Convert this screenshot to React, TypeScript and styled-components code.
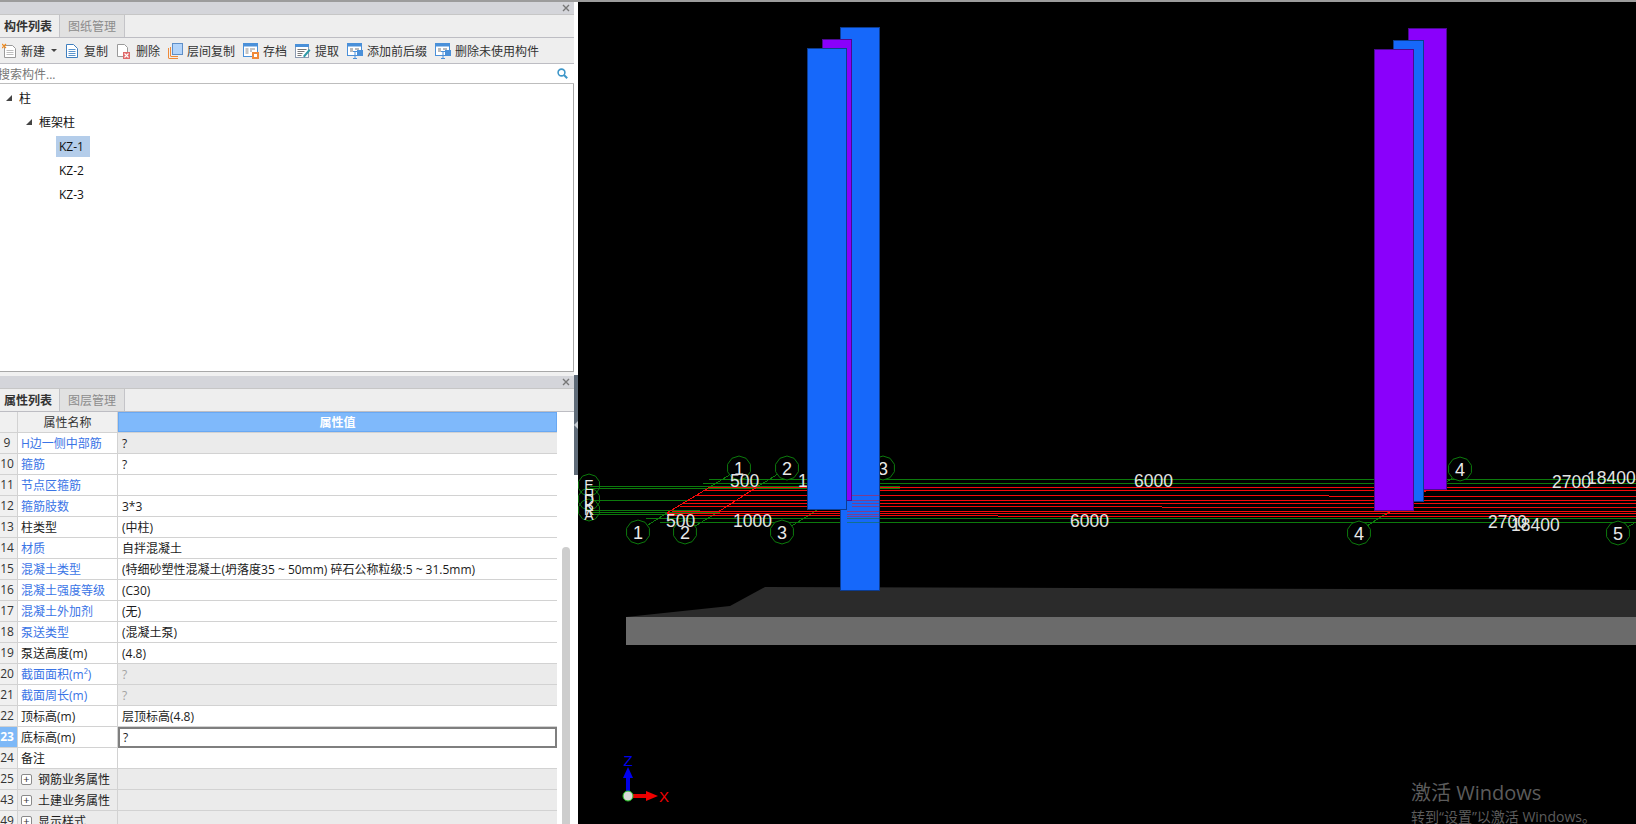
import React from "react";
import styled, { createGlobalStyle } from "styled-components";

const GlobalStyle = createGlobalStyle`
  html, body {
    margin: 0;
    padding: 0;
    height: 100%;
    overflow: hidden;
    background: #fff;
    font-family: "Open Sans", "Noto Sans CJK SC", sans-serif;
    font-size: 12px;
    color: #222;
  }
`;

const Screen = styled.div`
  width: 1636px;
  height: 824px;
  display: flex;
  flex-direction: column;
  overflow: hidden;
`;

const TopEdge = styled.div`
  height: 2px;
  flex: none;
  background: #9c9c9c;
`;

const Main = styled.div`
  flex: 1;
  min-height: 0;
  display: flex;
`;

const LeftColumn = styled.div`
  width: 574px;
  flex: none;
  display: flex;
  flex-direction: column;
`;

const Gutter = styled.div`
  width: 4px;
  flex: none;
  background: #fff;
  padding-top: 373px;
`;

const SplitHandle = styled.div`
  height: 100px;
  background: #5f6b78;
  display: flex;
  align-items: center;
`;

const HandleArrow = styled.div`
  width: 0;
  height: 0;
  border-top: 4px solid transparent;
  border-bottom: 4px solid transparent;
  border-right: 4px solid #c5cbd1;
`;

const TitleBar = styled.div`
  height: 12px;
  flex: none;
  background: #d4d5da;
  display: flex;
  justify-content: flex-end;
  align-items: center;
  padding-right: 4px;
`;

const TabBar = styled.div`
  height: 22px;
  flex: none;
  display: flex;
  background: #eeeeee;
  border-top: 1px solid #c6c6c6;
  border-bottom: 1px solid #bdbdc3;
`;

const Tab = styled.div<{ $active?: boolean }>`
  width: ${(p) => (p.$active ? "60px" : "65px")};
  display: flex;
  align-items: center;
  justify-content: ${(p) => (p.$active ? "flex-start" : "center")};
  padding-left: ${(p) => (p.$active ? "4px" : "0")};
  box-sizing: border-box;
  font-weight: ${(p) => (p.$active ? 700 : 400)};
  color: ${(p) => (p.$active ? "#333" : "#8c8c8c")};
  background: ${(p) => (p.$active ? "#eeeeee" : "#e1e1e1")};
  border-right: 1px solid #c4c4c8;
`;

const Toolbar = styled.div`
  height: 25px;
  flex: none;
  display: flex;
  align-items: center;
  gap: 8px;
  padding-left: 2px;
  background: #eeeeee;
  border-bottom: 1px solid #bdbdc3;
`;

const ToolButton = styled.div`
  display: flex;
  align-items: center;
  gap: 4px;
  color: #333;
  white-space: nowrap;
`;

const DropCaret = styled.span`
  width: 0;
  height: 0;
  margin-left: 2px;
  border-left: 3px solid transparent;
  border-right: 3px solid transparent;
  border-top: 3px solid #444;
`;

const SearchRow = styled.div`
  height: 19px;
  flex: none;
  display: flex;
  align-items: center;
  justify-content: space-between;
  padding-right: 6px;
  background: #fff;
  border-bottom: 1px solid #bdbdbd;
`;

const SearchPlaceholder = styled.span`
  margin-left: -2px;
  color: #777;
`;

const TreePane = styled.div`
  height: 288px;
  flex: none;
  padding-top: 2px;
  box-sizing: border-box;
  background: #fff;
  border-right: 1px solid #a8a8a8;
  border-bottom: 1px solid #a8a8a8;
`;

const TreeRow = styled.div<{ $indent: number }>`
  height: 24px;
  display: flex;
  align-items: center;
  padding-left: ${(p) => p.$indent}px;
  gap: 7px;
  color: #111;
`;

const Triangle = styled.span`
  width: 0;
  height: 0;
  border-left: 6px solid transparent;
  border-bottom: 6px solid #444;
`;

const Leaf = styled.span<{ $selected?: boolean }>`
  height: 21px;
  line-height: 21px;
  padding: 0 6px 0 3px;
  background: ${(p) => (p.$selected ? "#b4cdea" : "transparent")};
`;

const PaneGap = styled.div`
  height: 4px;
  flex: none;
  background: #f0f0f0;
`;

const PropsBody = styled.div`
  flex: 1;
  min-height: 0;
  display: flex;
  background: #fff;
  overflow: hidden;
`;

const Grid = styled.div`
  width: 557px;
  flex: none;
`;

const Row = styled.div`
  height: 21px;
  display: flex;
  box-sizing: border-box;
  border-bottom: 1px solid #d2d2d2;
`;

const IndexCell = styled.div<{ $current?: boolean }>`
  width: 18px;
  flex: none;
  box-sizing: border-box;
  padding-right: 3px;
  text-align: center;
  line-height: 20px;
  white-space: nowrap;
  border-right: 1px solid #d2d2d2;
  font-weight: ${(p) => (p.$current ? 700 : 400)};
  color: ${(p) => (p.$current ? "#fff" : "#333")};
  background: ${(p) => (p.$current ? "#7db8f7" : "#f0f0f0")};
`;

const NameCell = styled.div<{ $link?: boolean; $grey?: boolean }>`
  width: 100px;
  flex: none;
  box-sizing: border-box;
  padding-left: 3px;
  display: flex;
  align-items: center;
  gap: 6px;
  white-space: nowrap;
  border-right: 1px solid #d2d2d2;
  color: ${(p) => (p.$link ? "#3a74e6" : "#1c1c1c")};
  background: ${(p) => (p.$grey ? "#ebebeb" : "#fff")};
`;

const ValueCell = styled.div<{ $grey?: boolean; $muted?: boolean }>`
  flex: 1;
  box-sizing: border-box;
  padding-left: 4px;
  display: flex;
  align-items: center;
  white-space: nowrap;
  color: ${(p) => (p.$muted ? "#a3a3a3" : "#1c1c1c")};
  background: ${(p) => (p.$grey ? "#ebebeb" : "#fff")};
`;

const FocusedValue = styled(ValueCell)`
  border: 2px solid #7f7f7f;
  padding-left: 3px;
  margin-bottom: -1px;
`;

const HeaderName = styled(NameCell)`
  justify-content: center;
  padding: 0;
  background: #f0f0f0;
  color: #333;
`;

const HeaderValue = styled(ValueCell)`
  justify-content: center;
  padding: 0;
  font-weight: 700;
  color: #fff;
  background: #7fb9fb;
  box-shadow: inset 0 0 0 1px #68a8f3;
`;

const ExpandBox = styled.span`
  width: 11px;
  height: 11px;
  flex: none;
  box-sizing: border-box;
  border: 1px solid #8a8a8a;
  border-radius: 2px;
  background: #fff;
  font-size: 11px;
  line-height: 8px;
  text-align: center;
  color: #333;
`;

const ScrollTrack = styled.div`
  flex: 1;
  padding: 135px 4px 0 5px;
`;

const ScrollThumb = styled.div`
  width: 8px;
  height: 300px;
  border-radius: 4px 4px 0 0;
  background: #cdcdcd;
`;

const Viewport = styled.svg`
  display: block;
  flex: 1;
  min-width: 0;
  background: #000;
`;

const CloseGlyph = () => (
  <svg width="8" height="8" viewBox="0 0 8 8">
    <path d="M1 1l6 6M7 1L1 7" stroke="#777" strokeWidth="1.4" />
  </svg>
);

const NewIcon = () => (
  <svg width="15" height="16" viewBox="0 0 15 16">
    <path d="M2.5 2.5h8l3 3v9h-11z" fill="#fff" stroke="#9a9a9a" />
    <path d="M4.5 7.5h7M4.5 9.5h7M4.5 11.5h7" stroke="#bdbdbd" />
    <path d="M0 1l2 2M4 1L2 3M0 5l2-2M4 5L2 3" stroke="#f08a1c" strokeWidth="1.2" />
  </svg>
);

const CopyIcon = () => (
  <svg width="15" height="16" viewBox="0 0 15 16">
    <path d="M1.5 1.5h7l4 4v9h-11z" fill="#fff" stroke="#3f7fbf" />
    <path d="M3.5 6.5h7M3.5 8.5h7M3.5 10.5h7M3.5 12.5h7" stroke="#5a94cc" />
  </svg>
);

const DeleteIcon = () => (
  <svg width="16" height="16" viewBox="0 0 16 16">
    <path d="M1.5 1.5h7l3 3v9h-10z" fill="#fff" stroke="#9a9a9a" />
    <rect x="7" y="9" width="7" height="7" fill="#e06a6a" />
    <path d="M8.5 10.5l4 4M12.5 10.5l-4 4" stroke="#fff" strokeWidth="1.1" />
  </svg>
);

const FloorCopyIcon = () => (
  <svg width="15" height="16" viewBox="0 0 15 16">
    <path d="M.5 15V5M.5 15.5H10" stroke="#ee8a3a" />
    <path d="M2.5 13V4M2.5 13.5H10" stroke="#ee8a3a" />
    <rect x="4.5" y=".5" width="10" height="11" fill="#b3d4fa" stroke="#5f8fc8" />
  </svg>
);

const SaveIcon = () => (
  <svg width="16" height="16" viewBox="0 0 16 16">
    <rect x=".5" y=".5" width="14" height="13" fill="#fff" stroke="#4a90d9" />
    <rect x="0" y="0" width="15" height="3.5" fill="#4a90d9" />
    <path d="M2.5 6h3M2.5 8h3M2.5 10h3M7 6h5M7 8h2" stroke="#8a8a8a" />
    <rect x="9" y="9" width="7" height="7" fill="#f08a3a" />
    <rect x="11" y="11" width="3" height="3" fill="#fff" />
  </svg>
);

const ExtractIcon = () => (
  <svg width="16" height="16" viewBox="0 0 16 16">
    <rect x=".5" y="1.5" width="13" height="13" fill="#fff" stroke="#8a9ab0" />
    <rect x="0" y="1" width="14" height="3" fill="#4a90d9" />
    <path d="M2.5 6.5h9M2.5 8.5h7M2.5 10.5h5M2.5 12.5h4" stroke="#777" />
    <path d="M8 13l6-7 1.5 1.5-6 7z" fill="#2f9aa8" />
  </svg>
);

const PrefixIcon = () => (
  <svg width="16" height="16" viewBox="0 0 16 16">
    <rect x=".5" y=".5" width="14" height="12" fill="#fff" stroke="#4a90d9" />
    <rect x="0" y="0" width="15" height="3.5" fill="#4a90d9" />
    <path d="M3 6h3M3 8h3M8 6h4" stroke="#777" />
    <rect x="10" y="7" width="6" height="6" fill="#4a90d9" />
    <path d="M6 8.5h4M8 8.5v7M6 15.5h4" stroke="#4a90d9" />
  </svg>
);

const SearchIcon = () => (
  <svg width="11" height="11" viewBox="0 0 11 11">
    <circle cx="4.5" cy="4.5" r="3.4" fill="none" stroke="#3f97c9" strokeWidth="1.6" />
    <path d="M7 7l3.2 3.2" stroke="#3f97c9" strokeWidth="2" />
  </svg>
);

const tools = [
  { label: "新建", icon: <NewIcon />, caret: true },
  { label: "复制", icon: <CopyIcon /> },
  { label: "删除", icon: <DeleteIcon /> },
  { label: "层间复制", icon: <FloorCopyIcon /> },
  { label: "存档", icon: <SaveIcon /> },
  { label: "提取", icon: <ExtractIcon /> },
  { label: "添加前后缀", icon: <PrefixIcon /> },
  { label: "删除未使用构件", icon: <PrefixIcon /> },
];

type Prop = {
  no: number;
  name: React.ReactNode;
  value?: string;
  link?: boolean;
  grey?: boolean;
  muted?: boolean;
  focused?: boolean;
  group?: boolean;
};

const props: Prop[] = [
  { no: 9, name: "H边一侧中部筋", value: "?", link: true, grey: true },
  { no: 10, name: "箍筋", value: "?", link: true },
  { no: 11, name: "节点区箍筋", link: true },
  { no: 12, name: "箍筋肢数", value: "3*3", link: true },
  { no: 13, name: "柱类型", value: "(中柱)" },
  { no: 14, name: "材质", value: "自拌混凝土", link: true },
  {
    no: 15,
    name: "混凝土类型",
    value: "(特细砂塑性混凝土(坍落度35 ~ 50mm) 碎石公称粒级:5 ~ 31.5mm)",
    link: true,
  },
  { no: 16, name: "混凝土强度等级", value: "(C30)", link: true },
  { no: 17, name: "混凝土外加剂", value: "(无)", link: true },
  { no: 18, name: "泵送类型", value: "(混凝土泵)", link: true },
  { no: 19, name: "泵送高度(m)", value: "(4.8)" },
  { no: 20, name: "截面面积(m²)", value: "?", link: true, grey: true, muted: true },
  { no: 21, name: "截面周长(m)", value: "?", link: true, grey: true, muted: true },
  { no: 22, name: "顶标高(m)", value: "层顶标高(4.8)" },
  { no: 23, name: "底标高(m)", value: "?", focused: true },
  { no: 24, name: "备注" },
  { no: 25, name: "钢筋业务属性", group: true, grey: true },
  { no: 43, name: "土建业务属性", group: true, grey: true },
  { no: 49, name: "显示样式", group: true, grey: true },
];

// 3D scene data, in page pixels (the viewBox starts at the viewport's corner)
const GREEN = "#0c7a0c";
const RED = "#f50a0a";

const greenLines = [
  [590, 486, 900, 486.5],
  [590, 488, 900, 488.5],
  [590, 500.5, 780, 500.5],
  [590, 510, 700, 510],
  [590, 512, 720, 512.5],
  [590, 514, 680, 514],
  [709, 479, 1636, 479.5],
  [703, 483, 1636, 483.5],
  [646, 518, 1636, 518.5],
  [660, 522, 1636, 522.5],
  [640, 530, 667, 513],
  [710, 487, 731, 474],
  [692, 528, 718, 512],
  [757, 487, 778, 474],
  [790, 527, 817, 510],
  [1367, 526, 1390, 511],
  [1447, 482, 1452, 478],
  [1626, 528, 1636, 522],
];

const redLines = [
  [710, 487, 1636, 488],
  [705, 490, 1636, 491],
  [695, 495, 1636, 496.5],
  [688, 500, 1636, 501],
  [684, 503, 1636, 504],
  [680, 506, 1636, 508],
  [672, 511, 1636, 511.5],
  [667, 513, 1636, 514],
  [667, 515.5, 1636, 517],
  [710, 487, 667, 513],
  [757, 487, 718, 512],
  [1385, 515, 1392, 511],
  [1424, 492, 1430, 488],
];

const circles = [
  { x: 739, y: 468, t: "1" },
  { x: 787, y: 468, t: "2" },
  { x: 883, y: 468, t: "3" },
  { x: 1460, y: 469, t: "4" },
  { x: 638, y: 532, t: "1" },
  { x: 685, y: 532, t: "2" },
  { x: 782, y: 532, t: "3" },
  { x: 1359, y: 533, t: "4" },
  { x: 1618, y: 533, t: "5" },
];

const axisCircles = [485, 499, 510];
const axisLetters = [
  { y: 490, t: "E" },
  { y: 500, t: "H" },
  { y: 505, t: "D" },
  { y: 511, t: "K" },
  { y: 515, t: "R" },
  { y: 520, t: "A" },
];

const dims = [
  { x: 730, y: 487, t: "500" },
  { x: 798, y: 487, t: "1000" },
  { x: 1134, y: 487, t: "6000" },
  { x: 1552, y: 488, t: "2700" },
  { x: 1587, y: 484, t: "18400" },
  { x: 666, y: 527, t: "500" },
  { x: 733, y: 527, t: "1000" },
  { x: 1070, y: 527, t: "6000" },
  { x: 1488, y: 528, t: "2700" },
  { x: 1511, y: 531, t: "18400" },
];

const octagon = (cx: number, cy: number, r = 12) =>
  Array.from({ length: 10 }, (_, i) => {
    const a = (Math.PI * 2 * i) / 10 + Math.PI / 10;
    return `${cx + r * Math.cos(a)},${cy + r * Math.sin(a)}`;
  }).join(" ");

const Block = ({
  x,
  top,
  right,
  bottom,
  fill,
  edge,
}: {
  x: number;
  top: number;
  right: number;
  bottom: number;
  fill: string;
  edge: string;
}) => (
  <rect
    x={x + 0.5}
    y={top + 0.5}
    width={right - x - 1}
    height={bottom - top - 1}
    fill={fill}
    stroke={edge}
  />
);

const BLUE = "#1668fa";
const BLUE_EDGE = "#0c3c90";
const PURPLE = "#8a00fb";
const PURPLE_EDGE = "#4a0a90";

const Scene = () => (
  <Viewport viewBox="578 2 1058 822">
    <polygon points="765,587 730,606 626,617 1636,617 1636,590" fill="#2b2b2b" />
    <rect x="626" y="617" width="1010" height="28" fill="#6b6b6b" />

    <g shapeRendering="crispEdges">
      {greenLines.map(([x1, y1, x2, y2], i) => (
        <line key={i} x1={x1} y1={y1} x2={x2} y2={y2} stroke={GREEN} />
      ))}
      {redLines.map(([x1, y1, x2, y2], i) => (
        <line key={i} x1={x1} y1={y1} x2={x2} y2={y2} stroke={RED} />
      ))}
    </g>

    {axisCircles.map((y) => (
      <polygon key={y} points={octagon(589, y, 11)} fill="none" stroke={GREEN} />
    ))}
    {axisLetters.map((l) => (
      <text
        key={l.t}
        x="589"
        y={l.y}
        textAnchor="middle"
        fontFamily="Liberation Sans, sans-serif"
        fontSize="14"
        fill="#e8e8e8"
      >
        {l.t}
      </text>
    ))}

    {circles.map((c, i) => (
      <g key={i}>
        <polygon points={octagon(c.x, c.y)} fill="#000" stroke={GREEN} />
        <text
          x={c.x}
          y={c.y + 6.5}
          textAnchor="middle"
          fontFamily="Liberation Sans, sans-serif"
          fontSize="18"
          fill="#e8e8e8"
        >
          {c.t}
        </text>
      </g>
    ))}
    {dims.map((d, i) => (
      <text
        key={i}
        x={d.x}
        y={d.y}
        fontFamily="Liberation Sans, sans-serif"
        fontSize="17.5"
        fill="#e4e4e4"
      >
        {d.t}
      </text>
    ))}

    <Block x={840} top={27} right={880} bottom={591} fill={BLUE} edge={BLUE_EDGE} />
    <g opacity="0.45" shapeRendering="crispEdges">
      {[495, 500, 503, 506, 511, 514, 516].map((y) => (
        <line key={y} x1="852" y1={y} x2="879" y2={y} stroke={RED} />
      ))}
      {[511, 514, 516, 518, 522].map((y) => (
        <line key={y} x1="847" y1={y} x2="879" y2={y} stroke={y > 516 ? GREEN : RED} />
      ))}
    </g>
    <Block x={822} top={39} right={852} bottom={501} fill={PURPLE} edge={PURPLE_EDGE} />
    <Block x={807} top={48} right={847} bottom={510} fill={BLUE} edge={BLUE_EDGE} />

    <Block x={1408} top={28} right={1447} bottom={490} fill={PURPLE} edge={PURPLE_EDGE} />
    <Block x={1393} top={40} right={1424} bottom={502} fill={BLUE} edge={BLUE_EDGE} />
    <Block x={1374} top={49} right={1414} bottom={511} fill={PURPLE} edge={PURPLE_EDGE} />

    <rect x="626" y="777" width="4" height="16" fill="#0000e6" />
    <polygon points="628,767 623,778 633,778" fill="#0000f0" />
    <rect x="632" y="794" width="16" height="4" fill="#e60000" />
    <polygon points="658,796 646,791 646,801" fill="#f00000" />
    <circle cx="628" cy="796" r="5" fill="#d8d8d8" stroke="#22c322" />
    <text x="628" y="766" textAnchor="middle" fontFamily="Liberation Sans, sans-serif" fontSize="15" fill="#0000f0">
      Z
    </text>
    <text x="664" y="802" textAnchor="middle" fontFamily="Liberation Sans, sans-serif" fontSize="15" fill="#f00000">
      X
    </text>

    <text x="1411" y="800" fontFamily="Open Sans, Noto Sans CJK SC, sans-serif" fontSize="20" fill="#5c5c5c">
      激活 Windows
    </text>
    <text x="1411" y="822" fontFamily="Open Sans, Noto Sans CJK SC, sans-serif" fontSize="14" fill="#5c5c5c">
      转到“设置”以激活 Windows。
    </text>
  </Viewport>
);

const App = () => (
  <Screen>
    <GlobalStyle />
    <TopEdge />
    <Main>
      <LeftColumn>
        <TitleBar>
          <CloseGlyph />
        </TitleBar>
        <TabBar>
          <Tab $active>构件列表</Tab>
          <Tab>图纸管理</Tab>
        </TabBar>
        <Toolbar>
          {tools.map((t) => (
            <ToolButton key={t.label}>
              {t.icon}
              <span>{t.label}</span>
              {t.caret && <DropCaret />}
            </ToolButton>
          ))}
        </Toolbar>
        <SearchRow>
          <SearchPlaceholder>搜索构件...</SearchPlaceholder>
          <SearchIcon />
        </SearchRow>
        <TreePane>
          <TreeRow $indent={6}>
            <Triangle />
            <span>柱</span>
          </TreeRow>
          <TreeRow $indent={26}>
            <Triangle />
            <span>框架柱</span>
          </TreeRow>
          <TreeRow $indent={56}>
            <Leaf $selected>KZ-1</Leaf>
          </TreeRow>
          <TreeRow $indent={56}>
            <Leaf>KZ-2</Leaf>
          </TreeRow>
          <TreeRow $indent={56}>
            <Leaf>KZ-3</Leaf>
          </TreeRow>
        </TreePane>
        <PaneGap />
        <TitleBar>
          <CloseGlyph />
        </TitleBar>
        <TabBar>
          <Tab $active>属性列表</Tab>
          <Tab>图层管理</Tab>
        </TabBar>
        <PropsBody>
          <Grid>
            <Row>
              <IndexCell />
              <HeaderName>属性名称</HeaderName>
              <HeaderValue>属性值</HeaderValue>
            </Row>
            {props.map((p) => (
              <Row key={p.no}>
                <IndexCell $current={p.focused}>{p.no}</IndexCell>
                <NameCell $link={p.link} $grey={p.group}>
                  {p.group && <ExpandBox>+</ExpandBox>}
                  {p.name}
                </NameCell>
                {p.focused ? (
                  <FocusedValue>{p.value}</FocusedValue>
                ) : (
                  <ValueCell $grey={p.grey} $muted={p.muted}>
                    {p.value}
                  </ValueCell>
                )}
              </Row>
            ))}
          </Grid>
          <ScrollTrack>
            <ScrollThumb />
          </ScrollTrack>
        </PropsBody>
      </LeftColumn>
      <Gutter>
        <SplitHandle>
          <HandleArrow />
        </SplitHandle>
      </Gutter>
      <Scene />
    </Main>
  </Screen>
);

export default App;
